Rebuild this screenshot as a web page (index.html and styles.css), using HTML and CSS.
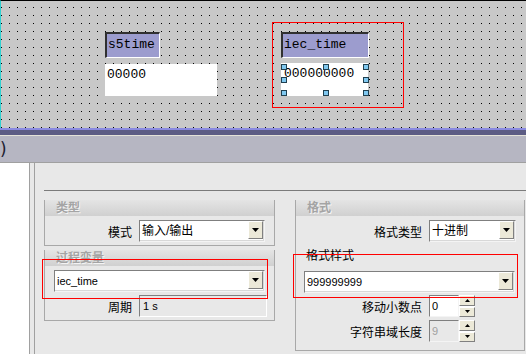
FILE: index.html
```html
<!DOCTYPE html>
<html>
<head>
    <title>Variable Properties</title>
    <link rel="stylesheet" href="styles.css">
</head>
<body>
    <div class="canvas">
        <div class="tag tag-s5">s5time</div>
        <div class="value val-s5">00000</div>
        <div class="tag tag-iec">iec_time</div>
        <div class="value val-iec">000000000
            <span class="handle h-tl"></span>
            <span class="handle h-tm"></span>
            <span class="handle h-tr"></span>
            <span class="handle h-ml"></span>
            <span class="handle h-mr"></span>
            <span class="handle h-bl"></span>
            <span class="handle h-bm"></span>
            <span class="handle h-br"></span>
        </div>
    </div>
    <div class="splitter"></div>
    <div class="titlebar">)</div>

    <div class="workspace">
        <div class="tree"></div>
        <div class="props">
            <div class="rule"></div>
            <div class="columns">
                <div class="col">
                    <div class="group">
                        <div class="group-head">类型</div>
                        <div class="group-body">
                            <div class="row">
                                <span class="label label-left">模式</span>
                                <div class="select w-mode">
                                    <span class="select-text">输入/输出</span>
                                    <span class="drop"><svg width="7" height="4"><polygon points="0,0 7,0 3.5,4" fill="#000"/></svg></span>
                                </div>
                            </div>
                        </div>
                    </div>
                    <div class="group">
                        <div class="group-head">过程变量</div>
                        <div class="group-body">
                            <div class="select w-var">
                                <span class="select-text latin">iec_time</span>
                                <span class="drop"><svg width="7" height="4"><polygon points="0,0 7,0 3.5,4" fill="#000"/></svg></span>
                            </div>
                            <div class="row row-gap">
                                <span class="label label-left">周期</span>
                                <div class="field latin">1 s</div>
                            </div>
                        </div>
                    </div>
                </div>

                <div class="col">
                    <div class="group">
                        <div class="group-head">格式</div>
                        <div class="group-body body-format">
                            <div class="row">
                                <span class="label label-right">格式类型</span>
                                <div class="select w-type">
                                    <span class="select-text">十进制</span>
                                    <span class="drop"><svg width="7" height="4"><polygon points="0,0 7,0 3.5,4" fill="#000"/></svg></span>
                                </div>
                            </div>
                            <div class="caption">格式样式</div>
                            <div class="select w-pattern">
                                <span class="select-text latin">999999999</span>
                                <span class="drop"><svg width="7" height="4"><polygon points="0,0 7,0 3.5,4" fill="#000"/></svg></span>
                            </div>
                            <div class="row spin-row">
                                <span class="label label-right">移动小数点</span>
                                <div class="spin">
                                    <span class="spin-field latin">0</span>
                                    <span class="spin-btns">
                                        <span class="spin-btn"><svg width="5" height="3"><polygon points="0,3 5,3 2.5,0" fill="#000"/></svg></span>
                                        <span class="spin-btn"><svg width="5" height="3"><polygon points="0,0 5,0 2.5,3" fill="#000"/></svg></span>
                                    </span>
                                </div>
                            </div>
                            <div class="row spin-row">
                                <span class="label label-right">字符串域长度</span>
                                <div class="spin">
                                    <span class="spin-field latin disabled">9</span>
                                    <span class="spin-btns">
                                        <span class="spin-btn"><svg width="5" height="3"><polygon points="0,3 5,3 2.5,0" fill="#000"/></svg></span>
                                        <span class="spin-btn"><svg width="5" height="3"><polygon points="0,0 5,0 2.5,3" fill="#000"/></svg></span>
                                    </span>
                                </div>
                            </div>
                        </div>
                    </div>
                </div>
            </div>
        </div>
    </div>

    <!-- highlight marks drawn over the screenshot -->
    <div class="mark mark-top"></div>
    <div class="mark mark-left"></div>
    <div class="mark mark-right"></div>
</body>
</html>
```

FILE: styles.css
```css
* {
    box-sizing: border-box;
}
body {
    margin: 0;
    width: 526px;
    height: 354px;
    overflow: hidden;
    position: relative;
    background: #e8e8e8;
    color: #000;
    font-family: "Liberation Sans", "Noto Sans CJK SC", sans-serif;
    font-size: 12px;
}

/* design canvas */
.canvas {
    position: relative;
    height: 128px;
    border-top: 1px solid #000;
    border-left: 1px solid #30d0d0;
    background-color: #c8c8c8;
    background-image:
        linear-gradient(to right, #c8c8c8 7px, transparent 7px),
        linear-gradient(to bottom, transparent 7px, #000 7px);
    background-size: 8px 8px;
    background-position: 1px 7px;
}
.tag {
    position: absolute;
    top: 31px;
    height: 26px;
    background: #9c9cce;
    border-top: 2px solid #303030;
    border-left: 2px solid #303030;
    border-right: 1px solid #fff;
    border-bottom: 1px solid #fff;
    font: 13px "Liberation Mono", monospace;
    line-height: 22px;
    padding-left: 1px;
}
.tag-s5 {
    left: 104px;
    width: 55px;
}
.tag-iec {
    left: 280px;
    width: 88px;
}
.value {
    position: absolute;
    background: #fff;
    font: 13px "Liberation Mono", monospace;
    line-height: 16px;
    padding-top: 3px;
}
.val-s5 {
    left: 104px;
    top: 63px;
    width: 112px;
    height: 32px;
    padding-left: 2px;
}
.val-iec {
    left: 280px;
    top: 62px;
    width: 87px;
    height: 33px;
    padding-left: 3px;
}
.handle {
    position: absolute;
    width: 6px;
    height: 6px;
    background: #80c8f0;
    border: 1px solid #204050;
}
.h-tl, .h-ml, .h-bl { left: 0; }
.h-tm, .h-bm { left: 42px; }
.h-tr, .h-mr, .h-br { left: 82px; }
.h-tl, .h-tm, .h-tr { top: 1px; }
.h-ml, .h-mr { top: 14px; }
.h-bl, .h-bm, .h-br { top: 27px; }

.splitter {
    height: 8px;
    border-top: 2px solid #8a8ae0;
    border-bottom: 1px solid #e4e2d8;
    background: #5c5c84;
}
.titlebar {
    height: 27px;
    background: #b6b6c2;
    border-bottom: 1px solid #a0a0a0;
    font: 17px "DejaVu Sans", sans-serif;
    line-height: 26px;
    color: #202030;
}

/* property area */
.workspace {
    display: flex;
    height: 191px;
}
.tree {
    width: 30px;
    margin-right: 4px;
    background: #fff;
    border-right: 1px solid #a0a0a0;
}
.props {
    flex: 1;
    border-left: 1px solid #a0a0a0;
    padding: 27px 0 0 9px;
}
.rule {
    height: 1px;
    background: #7c7c7c;
    margin-bottom: 9px;
}
.columns {
    display: grid;
    grid-template-columns: 231px 230px;
    column-gap: 20px;
    align-items: start;
}
.group {
    border: 1px solid #a8a8a8;
    border-top: 0;
}
.group + .group {
    margin-top: 4px;
}
.group-head {
    height: 16px;
    line-height: 16px;
    padding-left: 11px;
    background: linear-gradient(#e4e4e4, #d0d0d0);
    color: #a4a4a4;
    font-weight: bold;
    text-shadow: 1px 1px 0 #f4f4f4;
}
.group-body {
    padding: 4px 0 3px;
}
.body-format {
    padding-bottom: 8px;
}
.row {
    display: flex;
    align-items: center;
    gap: 7px;
}
.row-gap {
    margin-top: 3px;
}
.spin-row {
    margin-top: 2px;
}
.spin-row + .spin-row {
    margin-top: 3px;
}
.label {
    text-align: right;
    white-space: nowrap;
}
.label-left {
    width: 87px;
}
.label-right {
    width: 126px;
}
.caption {
    padding: 6px 0 7px 10px;
    line-height: 16px;
}

.select {
    display: flex;
    height: 22px;
    background: #fff;
    border: 1px solid;
    border-color: #7f7f7f #f4f4f4 #f4f4f4 #7f7f7f;
    box-shadow: inset -1px -1px 0 #d8d8d8;
}
.select-text {
    flex: 1;
    padding-left: 2px;
    line-height: 20px;
}
.latin {
    font-size: 11px;
}
.drop {
    width: 15px;
    margin: 0 1px 2px 0;
    background: #ece9d8;
    border: 1px solid;
    border-color: #fff #808080 #808080 #fff;
    display: flex;
    align-items: center;
    justify-content: center;
}
.w-mode {
    width: 126px;
}
.w-var {
    width: 211px;
    margin-left: 9px;
}
.w-type {
    width: 87px;
}
.w-pattern {
    width: 211px;
    margin-left: 8px;
}
.field {
    width: 128px;
    height: 22px;
    line-height: 20px;
    padding-left: 3px;
    border: 1px solid;
    border-color: #7f7f7f #fff #fff #7f7f7f;
}

.spin {
    display: flex;
    height: 22px;
}
.spin-field {
    width: 30px;
    background: #fff;
    line-height: 20px;
    padding-left: 2px;
    border: 1px solid;
    border-color: #7f7f7f #f4f4f4 #f4f4f4 #7f7f7f;
}
.spin-field.disabled {
    background: #e8e8e8;
    color: #a0a0a0;
}
.spin-btns {
    width: 16px;
    display: flex;
    flex-direction: column;
    gap: 1px;
    background: #fff;
}
.spin-btn {
    flex: 1;
    background: #ece9d8;
    border: 1px solid;
    border-color: #fff #808080 #808080 #fff;
    display: flex;
    align-items: center;
    justify-content: center;
}

.mark {
    position: absolute;
    border: 1px solid #f00;
}
.mark-top {
    left: 272px;
    top: 22px;
    width: 132px;
    height: 86px;
}
.mark-left {
    left: 42px;
    top: 259px;
    width: 226px;
    height: 40px;
}
.mark-right {
    left: 293px;
    top: 254px;
    width: 225px;
    height: 44px;
}
```
